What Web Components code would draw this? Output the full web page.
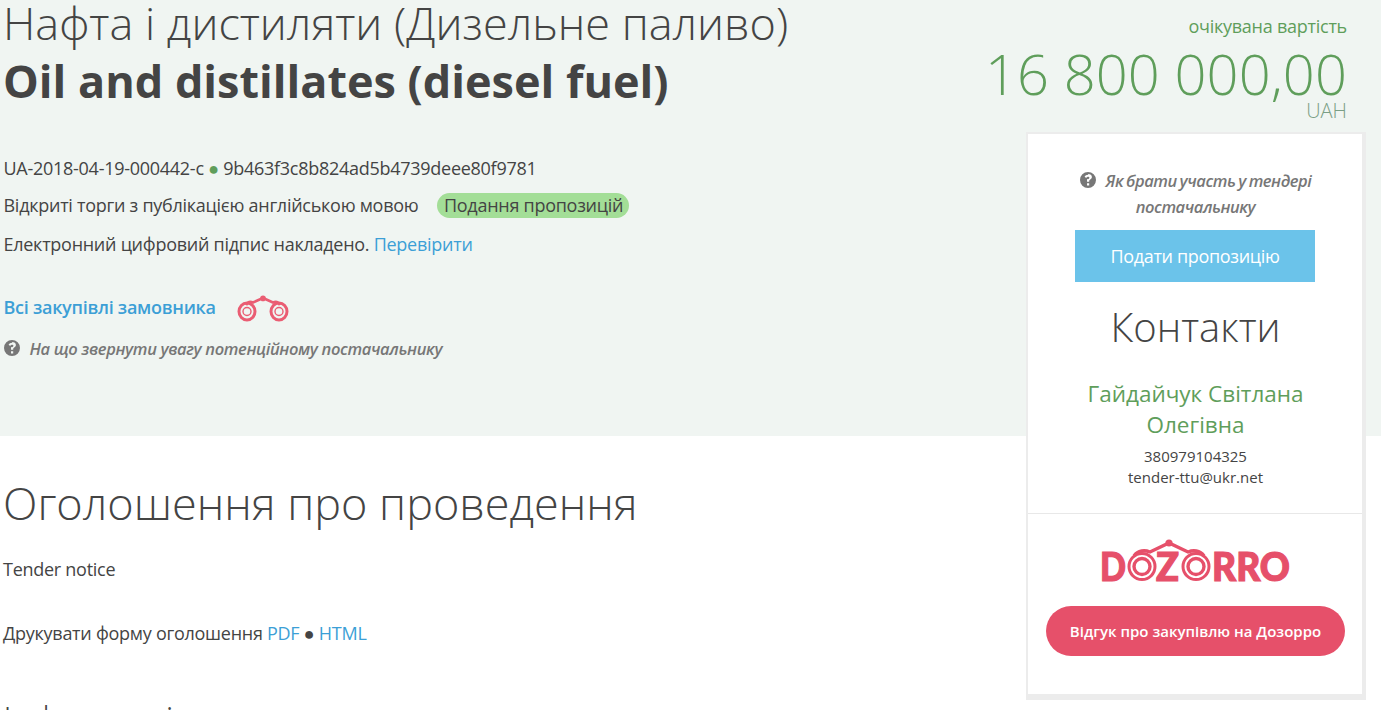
<!DOCTYPE html>
<html lang="uk">
<head>
<meta charset="utf-8">
<title>Нафта і дистиляти</title>
<style>
  html, body { margin: 0; height: 710px; overflow: hidden; background: #fff; }
  body { font-family: "Open Sans", sans-serif; color: #444; }
</style>
</head>
<body>
<tender-page>
  <tender-head slot="head"></tender-head>
  <tender-sidebar slot="side"></tender-sidebar>
  <tender-notice slot="body"></tender-notice>
</tender-page>

<script>
// binoculars mark next to the buyer link
const BINOCULARS = `
  <path d="M8 10 C10 6.500 13 6.500 15 7.500 L25 3 L35 7.500 C37 6.500 40 6.500 42 10" transform="translate(1 0)" fill="none" stroke="currentColor" stroke-width="2.600"/>
  <circle cx="26" cy="3.400" r="2.800" fill="currentColor"/>
  <ellipse cx="10" cy="16.500" rx="8" ry="8.500" fill="none" stroke="currentColor" stroke-width="3"/>
  <circle cx="10" cy="16.500" r="4" fill="none" stroke="currentColor" stroke-width="1.400"/>
  <ellipse cx="42" cy="16.500" rx="8" ry="8.500" fill="none" stroke="currentColor" stroke-width="3"/>
  <circle cx="42" cy="16.500" r="4" fill="none" stroke="currentColor" stroke-width="1.400"/>`;

class HelpLink extends HTMLElement {
  constructor() {
    super();
    this.attachShadow({ mode: 'open' }).innerHTML = `
      <style>
        :host { display: inline; font-style: italic; font-weight: 600; color: #777; font-size: 16.5px; letter-spacing: -0.35px; }
        svg { width: 16px; height: 16px; vertical-align: -1px; margin-right: 10px; fill: #777; }
      </style>
      <svg viewBox="0 0 16 16"><path fill-rule="evenodd" d="M8 0a8 8 0 1 1 0 16A8 8 0 0 1 8 0zM7 11.200v2.300h2.200v-2.300zM8.200 2.800c-1.700 0-3 .8-3.600 2l1.600 1.100c.4-.7 1-1.100 1.800-1.100.8 0 1.400.4 1.400 1 0 .6-.4.9-1.100 1.400C7.500 6.800 7 7.400 7 8.400v1.300h2.200v-.9c0-.5.300-.8 1-1.300.9-.6 1.700-1.300 1.700-2.600 0-1.900-1.600-2.900-3.700-2.900z"/></svg><slot></slot>`;
  }
}
customElements.define('help-link', HelpLink);

class TenderHead extends HTMLElement {
  constructor() {
    super();
    this.attachShadow({ mode: 'open' }).innerHTML = `
      <style>
        :host { display: flex; justify-content: space-between; align-items: flex-start; color: #444; }
        a { color: #3c9fd6; text-decoration: none; }
        .main { padding-left: 3px; }
        h1 { margin: -6px 0 0; font-size: 45px; line-height: 58px; font-weight: 300; white-space: nowrap; }
        h1 b { display: block; font-weight: 700; }
        .rows { margin: 39px 0 0 0.5px; font-size: 18px; letter-spacing: -0.27px; }
        .row { height: 38px; display: flex; align-items: center; white-space: pre; }
        .row:nth-child(2) { margin: -1px 0 1px; }
        .dot { color: #5f9e5b; }
        .status { margin-left: 18.5px; background: #a3de97; border-radius: 13px; padding: 0 6px 0 7px; height: 25px; line-height: 25px; }
        .buyer { margin: 21px 0 0 0.5px; height: 46px; font-size: 18px; letter-spacing: -0.27px; font-weight: 600; display: flex; align-items: center; }
        .buyer svg { width: 52px; height: 28px; margin: 4px 0 0 21.5px; color: #ea5d73; }
        .note { margin: 7px 0 0 0.5px; }
        .price { margin-right: 34px; text-align: right; color: #5f9e5b; font-weight: 300; }
        .price .cap { font-size: 18px; letter-spacing: -0.25px; font-weight: 400; line-height: 24px; margin-top: 14px; }
        .price .sum { font-size: 56px; line-height: 56px; margin-top: 7px; letter-spacing: 0.1px; }
        .price .cur { font-size: 20px; line-height: 20px; color: #7a9e85; }
      </style>
      <div class="main">
        <h1>Нафта і дистиляти (Дизельне паливо)<b>Oil and distillates (diesel fuel)</b></h1>
        <div class="rows">
          <div class="row">UA-2018-04-19-000442-c <span class="dot">●</span> 9b463f3c8b824ad5b4739deee80f9781</div>
          <div class="row">Відкриті торги з публікацією англійською мовою<span class="status">Подання пропозицій</span></div>
          <div class="row">Електронний цифровий підпис накладено. <a href="#">Перевірити</a></div>
        </div>
        <div class="buyer"><a href="#">Всі закупівлі замовника</a><svg viewBox="0 0 52 28">${BINOCULARS}</svg></div>
        <div class="note"><help-link>На що звернути увагу потенційному постачальнику</help-link></div>
      </div>
      <div class="price">
        <div class="cap">очікувана вартість</div>
        <div class="sum">16 800 000,00</div>
        <div class="cur">UAH</div>
      </div>`;
  }
}
customElements.define('tender-head', TenderHead);

class TenderSidebar extends HTMLElement {
  constructor() {
    super();
    this.attachShadow({ mode: 'open' }).innerHTML = `
      <style>
        :host { display: block; box-sizing: border-box; background: #fff; border: solid #ececec; border-width: 2px 4px 6px 2px; height: 568px; text-align: center; color: #444; }
        .help { padding: 34px 30px 0 31px; line-height: 26px; height: 52px; }
        .help help-link { letter-spacing: -0.45px; word-spacing: -1px; }
        .apply { display: block; width: 240px; height: 52px; line-height: 52px; margin: 10px auto 0; background: #6bc3ea; color: #fff; font-size: 18px; letter-spacing: -0.33px; text-decoration: none; }
        h2 { margin: 17px 0 0; padding-left: 1px; font-size: 40px; line-height: 56px; font-weight: 300; }
        .name { margin-top: 23px; color: #5f9e5b; font-size: 22.500px; line-height: 31px; padding: 0 30px 0 31px; }
        .contact { margin-top: 6px; padding-left: 1px; font-size: 15px; line-height: 21px; }
        .dz { margin-top: 25px; border-top: 1px solid #e8e8e8; padding-top: 21px; }
        .logo { display: block; margin: 0 auto; width: 194px; height: 60px; color: #e6506a; }
        .logo text { font-family: "Lato", "Open Sans", sans-serif; font-weight: 900; font-size: 40px; fill: currentColor; stroke: currentColor; stroke-width: 1.200; }
        .review { display: block; margin: 11px 17px 0 18px; height: 50px; line-height: 50px; border-radius: 25px; background: #e6506a; color: #fff; font-size: 15px; font-weight: 600; text-decoration: none; }
      </style>
      <div class="help"><help-link>Як брати участь у тендері постачальнику</help-link></div>
      <a class="apply" href="#">Подати пропозицію</a>
      <h2>Контакти</h2>
      <div class="name">Гайдайчук Світлана Олегівна</div>
      <div class="contact">380979104325<br>tender-ttu@ukr.net</div>
      <div class="dz">
        <svg class="logo" viewBox="0 0 194 60">
          <text x="2" y="46" textLength="26" lengthAdjust="spacingAndGlyphs">D</text>
          <text x="58" y="46" textLength="23" lengthAdjust="spacingAndGlyphs">Z</text>
          <text x="114" y="46" textLength="78" lengthAdjust="spacingAndGlyphs">RRO</text>
          <path d="M36 21 C40 15 47 15 52 17 L71 8 L90 17 C95 15 102 15 106 21" fill="none" stroke="currentColor" stroke-width="3.400"/>
          <circle cx="71" cy="8" r="3.600" fill="currentColor"/>
          <circle cx="44" cy="31.500" r="13" fill="#fff" stroke="currentColor" stroke-width="3"/>
          <circle cx="44" cy="31.500" r="8" fill="#fff" stroke="currentColor" stroke-width="3.400"/>
          <circle cx="98" cy="31.500" r="13" fill="#fff" stroke="currentColor" stroke-width="3"/>
          <circle cx="98" cy="31.500" r="8" fill="#fff" stroke="currentColor" stroke-width="3.400"/>
        </svg>
        <a class="review" href="#">Відгук про закупівлю на Дозорро</a>
      </div>`;
  }
}
customElements.define('tender-sidebar', TenderSidebar);

class TenderNotice extends HTMLElement {
  constructor() {
    super();
    this.attachShadow({ mode: 'open' }).innerHTML = `
      <style>
        :host { display: block; padding: 39px 0 0 3px; color: #444; font-size: 18px; letter-spacing: -0.27px; }
        a { color: #3c9fd6; text-decoration: none; }
        h2 { margin: 0; font-size: 45px; line-height: 56px; font-weight: 300; letter-spacing: 0; }
        p { margin: 0; line-height: 24px; }
        .en { margin-top: 26px; }
        .print { margin-top: 40px; }
        h3 { margin: 50px 0 0; font-size: 36px; line-height: 50px; font-weight: 300; letter-spacing: 0; }
      </style>
      <h2>Оголошення про проведення</h2>
      <p class="en">Tender notice</p>
      <p class="print">Друкувати форму оголошення <a href="#">PDF</a> ● <a href="#">HTML</a></p>
      <h3>Інформація про замовника</h3>`;
  }
}
customElements.define('tender-notice', TenderNotice);

// page grid: green band behind the first rows, sidebar hangs over the band's edge
class TenderPage extends HTMLElement {
  constructor() {
    super();
    this.attachShadow({ mode: 'open' }).innerHTML = `
      <style>
        :host { display: grid; grid-template-columns: 1fr 340px 15px; grid-template-rows: 132px 304px 1fr; height: 710px; overflow: hidden; }
        .band { grid-column: 1 / -1; grid-row: 1 / 3; background: #f0f5f2; }
        .head { grid-column: 1 / -1; grid-row: 1 / 3; }
        .side { grid-column: 2; grid-row: 2 / 4; z-index: 1; }
        .body { grid-column: 1; grid-row: 3; }
      </style>
      <div class="band"></div>
      <div class="head"><slot name="head"></slot></div>
      <div class="side"><slot name="side"></slot></div>
      <div class="body"><slot name="body"></slot></div>`;
  }
}
customElements.define('tender-page', TenderPage);
</script>
</body>
</html>
